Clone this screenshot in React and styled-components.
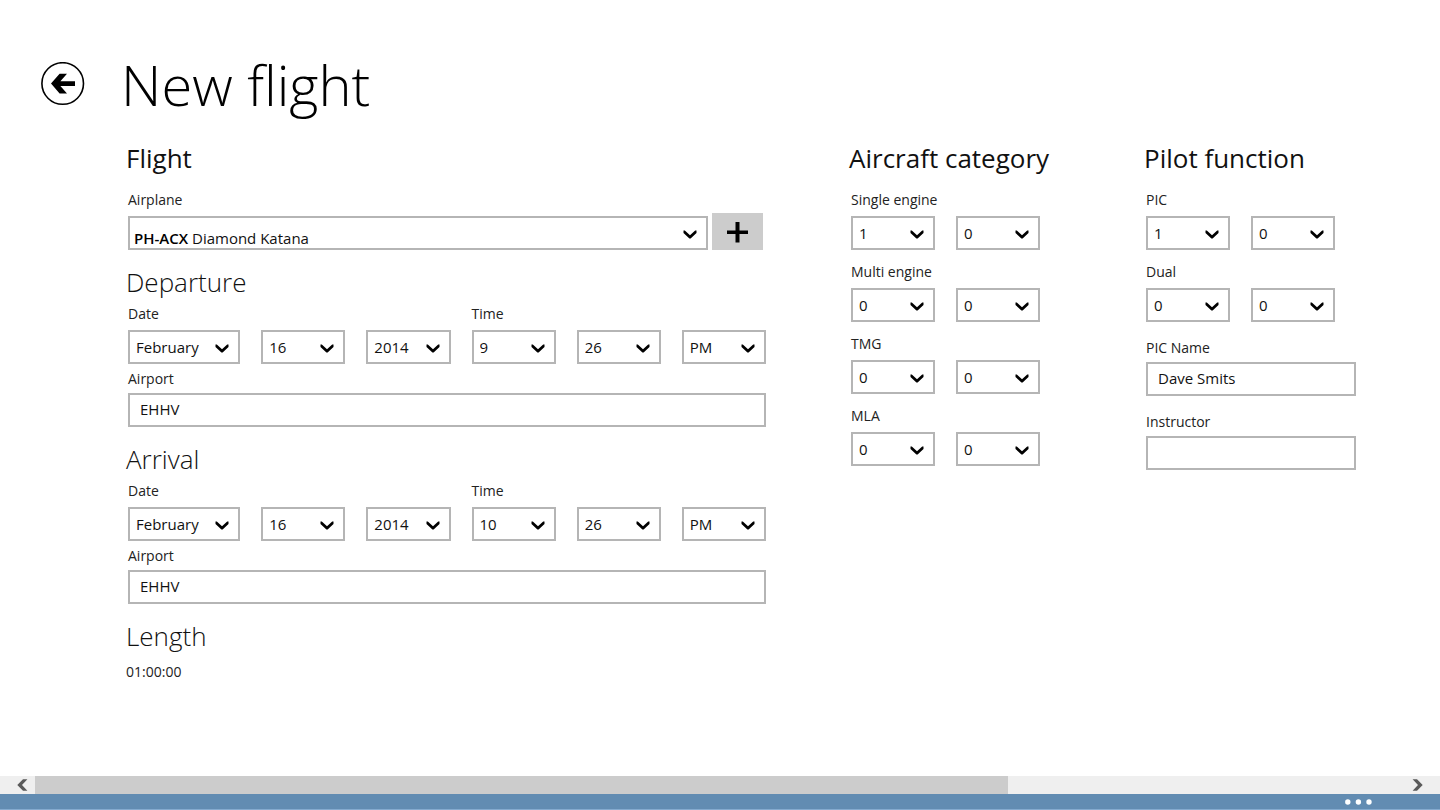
import React, { useId, useState } from "react";
import styled, { createGlobalStyle } from "styled-components";

const GlobalStyle = createGlobalStyle`
  *, *::before, *::after { box-sizing: border-box; }
  body {
    margin: 0;
    background: #fff;
    color: #111;
    font-family: "Open Sans", "Noto Sans", sans-serif;
    font-size: 15px;
    line-height: 20px;
  }
`;

const Page = styled.div`
  display: flex;
  flex-direction: column;
  min-height: 100vh;
`;

const Header = styled.header`
  display: flex;
  align-items: center;
  gap: 36px;
  padding: 46px 41px 0;
`;

const BackButton = styled.button`
  display: block;
  width: 44px;
  height: 44px;
  padding: 0;
  border: 0;
  background: none;
  color: #000;
  cursor: pointer;
`;

const Title = styled.h1`
  margin: 0;
  font-size: 56px;
  font-weight: 300;
  line-height: 76px;
  color: #000;
`;

const Form = styled.form`
  flex: 1;
  display: grid;
  grid-template-columns: minmax(0, 1fr) 210px 210px;
  align-items: start;
  gap: 85px;
  padding: 18px 84px 40px 128px;
`;

const Column = styled.section`
  display: flex;
  flex-direction: column;
`;

const Heading = styled.h2`
  margin: ${(p) => (p.$light ? "14px 0 4px -2px" : "0 0 14px -2px")};
  font-size: 26px;
  font-weight: ${(p) => (p.$light ? 300 : 400)};
  line-height: 36px;
  white-space: nowrap;
  color: #111;
`;

const Label = styled.label`
  display: block;
  font-size: 14px;
  color: #222;
`;

const Field = styled.div`
  display: flex;
  flex-direction: column;
  gap: ${(p) => p.$gap || 4}px;
`;

const Stack = styled.div`
  display: flex;
  flex-direction: column;
  gap: ${(p) => p.$gap}px;
`;

const PlaneRow = styled.div`
  display: flex;
  align-items: flex-end;
  gap: 4px;
  margin-top: -3px;
  padding-right: 3px;
`;

const PairRow = styled.div`
  display: grid;
  grid-template-columns: repeat(2, 84px);
  gap: 21px;
`;

const DateTimeGrid = styled.div`
  display: grid;
  grid-template-columns: 4fr repeat(5, 3fr);
  column-gap: 21px;
  margin-bottom: 5px;
`;

const DateTimeGroup = styled.div`
  grid-column: span 3;
  display: grid;
  grid-template-columns: subgrid;
  row-gap: 6px;
`;

const GroupLabel = styled.span`
  grid-column: 1 / -1;
  font-size: 14px;
  color: #222;
`;

const SelectBox = styled.div`
  position: relative;
  flex: 1;
  min-width: 0;
  height: 34px;
`;

const NativeSelect = styled.select`
  display: block;
  width: 100%;
  height: 34px;
  padding: 0 28px 0 6px;
  border: 2px solid #b5b5b5;
  border-radius: 0;
  background: #fff;
  color: ${(p) => (p.$covered ? "transparent" : "#111")};
  font: inherit;
  appearance: none;

  option { color: #111; }
`;

const SelectChevron = styled.svg`
  position: absolute;
  right: 11px;
  top: 14px;
  width: 14px;
  height: 9px;
  pointer-events: none;
`;

const PlaneText = styled.span`
  position: absolute;
  left: 6px;
  top: 12px;
  pointer-events: none;
  white-space: nowrap;
  color: #111;

  b { font-weight: 600; color: #000; }
`;

const TextInput = styled.input`
  display: block;
  width: 100%;
  height: 34px;
  padding: 0 10px 2px;
  border: 2px solid #b5b5b5;
  border-radius: 0;
  background: #fff;
  color: #111;
  font: inherit;
`;

const AddButton = styled.button`
  display: flex;
  align-items: center;
  justify-content: center;
  width: 51px;
  height: 37px;
  padding: 1px 0 0;
  border: 0;
  background: #ccc;
  color: #000;
  cursor: pointer;
`;

const Duration = styled.output`
  margin-top: 4px;
  margin-left: -2px;
  font-size: 14px;
  font-weight: 400;
  color: #222;
`;

const ScrollBar = styled.div`
  display: flex;
  height: 18px;
  background: #efefef;
`;

const ScrollButton = styled.button`
  display: flex;
  align-items: center;
  justify-content: ${(p) => (p.$end ? "flex-start" : "flex-end")};
  width: 35px;
  padding: 0 7px;
  border: 0;
  background: none;
  color: #5a5a5a;
`;

const ScrollTrack = styled.div`
  flex: 1;
`;

const ScrollThumb = styled.div`
  width: 71%;
  height: 100%;
  background: #ccc;
`;

const AppBar = styled.footer`
  display: flex;
  justify-content: flex-end;
  height: 16px;
  padding-right: 68px;
  border-bottom: 1px solid #85abcf;
  background: #628cb2;
`;

const MoreButton = styled.button`
  display: flex;
  align-items: center;
  height: 15px;
  padding: 0;
  border: 0;
  background: none;
  color: #fff;
`;

const MONTHS = [
  "January", "February", "March", "April", "May", "June", "July",
  "August", "September", "October", "November", "December",
];
const range = (from, to) =>
  Array.from({ length: to - from + 1 }, (_, i) => String(from + i));

const DAYS = range(1, 31);
const YEARS = range(2010, 2016);
const HOURS = range(1, 12);
const MINUTES = range(0, 59);
const COUNTS = range(0, 20);

function Chevron() {
  return (
    <SelectChevron viewBox="0 0 14 9" aria-hidden="true">
      <path d="M0.5 0.5 H1.8 L7 5.2 L12.2 0.5 H13.5 V3 L7.6 8.6 H6.4 L0.5 3 Z" fill="#000" />
    </SelectChevron>
  );
}

function Dropdown({ id, label, value, options }) {
  return (
    <SelectBox>
      <NativeSelect id={id} aria-label={label} defaultValue={value}>
        {options.map((o) => (
          <option key={o}>{o}</option>
        ))}
      </NativeSelect>
      <Chevron />
    </SelectBox>
  );
}

const PLANES = [{ tail: "PH-ACX", type: "Diamond Katana" }];

function PlaneDropdown({ id }) {
  const [tail, setTail] = useState("PH-ACX");
  const plane = PLANES.find((p) => p.tail === tail);
  return (
    <SelectBox>
      <NativeSelect
        id={id}
        $covered
        value={tail}
        onChange={(e) => setTail(e.target.value)}
      >
        {PLANES.map((p) => (
          <option key={p.tail} value={p.tail} label={`${p.tail} ${p.type}`} />
        ))}
      </NativeSelect>
      <PlaneText aria-hidden="true">
        <b>{plane.tail}</b> {plane.type}
      </PlaneText>
      <Chevron />
    </SelectBox>
  );
}

function Leg({ title, hour, airport }) {
  const id = useId();
  return (
    <>
      <Heading $light>{title}</Heading>
      <DateTimeGrid>
        <DateTimeGroup role="group" aria-labelledby={`${id}-date`}>
          <GroupLabel id={`${id}-date`}>Date</GroupLabel>
          <Dropdown label="Month" value="February" options={MONTHS} />
          <Dropdown label="Day" value="16" options={DAYS} />
          <Dropdown label="Year" value="2014" options={YEARS} />
        </DateTimeGroup>
        <DateTimeGroup role="group" aria-labelledby={`${id}-time`}>
          <GroupLabel id={`${id}-time`}>Time</GroupLabel>
          <Dropdown label="Hour" value={hour} options={HOURS} />
          <Dropdown label="Minute" value="26" options={MINUTES} />
          <Dropdown label="AM or PM" value="PM" options={["AM", "PM"]} />
        </DateTimeGroup>
      </DateTimeGrid>
      <TextField label="Airport" value={airport} />
    </>
  );
}

function TextField({ label, value }) {
  const id = useId();
  return (
    <Field>
      <Label htmlFor={id}>{label}</Label>
      <TextInput id={id} type="text" defaultValue={value} />
    </Field>
  );
}

function CountField({ label, values }) {
  const id = useId();
  return (
    <Field $gap={6}>
      <Label htmlFor={id}>{label}</Label>
      <PairRow>
        <Dropdown id={id} value={values[0]} options={COUNTS} />
        <Dropdown label={`${label}, second value`} value={values[1]} options={COUNTS} />
      </PairRow>
    </Field>
  );
}

export default function App() {
  return (
    <Page>
      <GlobalStyle />
      <Header>
        <BackButton type="button" aria-label="Back">
          <svg width="44" height="44" viewBox="0 0 44 44" aria-hidden="true">
            <circle cx="21.7" cy="21.5" r="20.8" fill="none" stroke="currentColor" strokeWidth="1.6" />
            <path d="M10 21.6 L18.6 11.8 H26 L19.4 19.3 H34 V23.9 H19.4 L26 31.4 H18.6 Z" fill="currentColor" />
          </svg>
        </BackButton>
        <Title>New flight</Title>
      </Header>

      <Form onSubmit={(e) => e.preventDefault()}>
        <Column>
          <Heading>Flight</Heading>
          <Field $gap={6}>
            <Label htmlFor="airplane">Airplane</Label>
            <PlaneRow>
              <PlaneDropdown id="airplane" />
              <AddButton type="button" aria-label="Add airplane">
                <svg width="21" height="21" viewBox="0 0 21 21" aria-hidden="true">
                  <path d="M8.5 0 H12.5 V8.5 H21 V12 H12.5 V20.5 H8.5 V12 H0 V8.5 H8.5 Z" fill="currentColor" />
                </svg>
              </AddButton>
            </PlaneRow>
          </Field>
          <Leg title="Departure" hour="9" airport="EHHV" />
          <Leg title="Arrival" hour="10" airport="EHHV" />
          <Heading $light>Length</Heading>
          <Duration>01:00:00</Duration>
        </Column>

        <Column>
          <Heading>Aircraft category</Heading>
          <Stack $gap={12}>
            <CountField label="Single engine" values={["1", "0"]} />
            <CountField label="Multi engine" values={["0", "0"]} />
            <CountField label="TMG" values={["0", "0"]} />
            <CountField label="MLA" values={["0", "0"]} />
          </Stack>
        </Column>

        <Column>
          <Heading>Pilot function</Heading>
          <Stack $gap={16}>
            <Stack $gap={12}>
              <CountField label="PIC" values={["1", "0"]} />
              <CountField label="Dual" values={["0", "0"]} />
            </Stack>
            <TextField label="PIC Name" value="Dave Smits" />
            <TextField label="Instructor" value="" />
          </Stack>
        </Column>
      </Form>

      <ScrollBar>
        <ScrollButton type="button" aria-label="Scroll left">
          <svg width="11" height="12" viewBox="0 0 11 12" aria-hidden="true">
            <path d="M0.3 6 L6 0.2 H10.4 L5 6 L10.4 11.8 H6 Z" fill="currentColor" />
          </svg>
        </ScrollButton>
        <ScrollTrack>
          <ScrollThumb />
        </ScrollTrack>
        <ScrollButton $end type="button" aria-label="Scroll right">
          <svg width="11" height="12" viewBox="0 0 11 12" aria-hidden="true">
            <path d="M10.7 6 L5 0.2 H0.6 L6 6 L0.6 11.8 H5 Z" fill="currentColor" />
          </svg>
        </ScrollButton>
      </ScrollBar>
      <AppBar>
        <MoreButton type="button" aria-label="More commands">
          <svg width="27" height="6" viewBox="0 0 27 6" aria-hidden="true">
            <circle cx="2.8" cy="3" r="2.7" fill="currentColor" />
            <circle cx="13.4" cy="3" r="2.7" fill="currentColor" />
            <circle cx="24" cy="3" r="2.7" fill="currentColor" />
          </svg>
        </MoreButton>
      </AppBar>
    </Page>
  );
}
